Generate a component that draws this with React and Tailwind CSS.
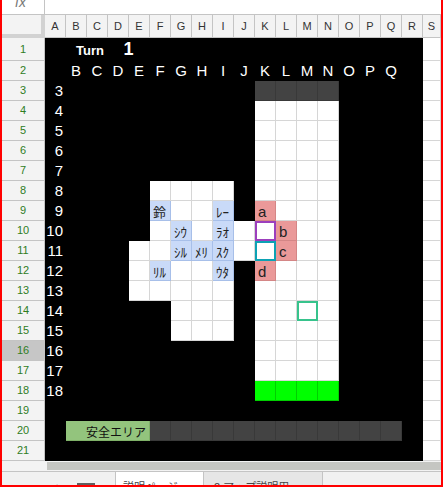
const COLS = ['A', 'B', 'C', 'D', 'E', 'F', 'G', 'H', 'I', 'J', 'K', 'L', 'M', 'N', 'O', 'P', 'Q', 'R', 'S']

const LOOK = {
  black: 'border-r border-b bg-black border-black',
  white: 'border-r border-b bg-white border-[#d6d6d6]',
  dark: 'border-r border-b bg-[#434343] border-[#393939]',
  green: 'border-r border-b bg-[#00ff00] border-[#00cf00]',
  blue: 'border-r border-b bg-[#c9daf8] border-[#a7bfe9]',
  pink: 'border-r border-b bg-[#ea9999] border-[#d48686]',
  safe: 'border-r border-b bg-[#93c47d] border-[#7fb168]',
  purple: 'border-2 bg-white border-[#9c3fbd]',
  teal: 'border-2 bg-white border-[#0ca2b4]',
  gbox: 'border-2 bg-white border-[#37c38c]',
}

// board cells that differ from the black background (row-col)
const BOARD = {
  '8-5': ['white'], '8-6': ['white'], '8-7': ['white'], '8-8': ['white'],
  '9-5': ['blue', '鈴'], '9-6': ['white'], '9-7': ['white'], '9-8': ['blue', 'ﾚｰ'], '9-10': ['pink', 'a'],
  '10-5': ['white'], '10-6': ['blue', 'ｼｳ'], '10-7': ['white'], '10-8': ['blue', 'ﾗｵ'], '10-9': ['white'],
  '10-10': ['purple'], '10-11': ['pink', 'b'],
  '11-4': ['white'], '11-5': ['white'], '11-6': ['blue', 'ｼﾙ'], '11-7': ['blue', 'ﾒﾘ'], '11-8': ['blue', 'ｽｸ'],
  '11-9': ['white'], '11-10': ['teal'], '11-11': ['pink', 'c'],
  '12-4': ['white'], '12-5': ['blue', 'ﾘﾙ'], '12-6': ['white'], '12-7': ['white'], '12-8': ['blue', 'ｳﾀ'],
  '12-10': ['pink', 'd'],
  '13-4': ['white'], '13-5': ['white'], '13-6': ['white'], '13-7': ['white'], '13-8': ['white'],
  '14-6': ['white'], '14-7': ['white'], '14-8': ['white'], '14-12': ['gbox'],
  '15-6': ['white'], '15-7': ['white'], '15-8': ['white'],
}

function cellAt(r, c) {
  const hit = BOARD[r + '-' + c]
  if (hit) return hit
  if (c >= 10 && c <= 13 && r >= 3 && r <= 18) {
    if (r === 3) return ['dark']
    if (r === 18) return ['green']
    return ['white']
  }
  return ['black']
}

function Cell({ look = 'black', span = '', className = '', children }) {
  return (
    <div className={`${LOOK[look]} ${span} flex items-end overflow-hidden whitespace-nowrap ${className}`}>
      {children}
    </div>
  )
}

function SheetCell() {
  return <div className="border-r border-b border-[#d6d6d6] bg-white"></div>
}

function RowHead({ n }) {
  return (
    <div className={`${n === 16 ? 'bg-[#c6c6c6]' : 'bg-[#f3f3f3]'} border-r border-b border-[#c4c4c4] flex items-center justify-center text-[11px] text-[#2f7d1e]`}>
      {n}
    </div>
  )
}

function BoardRow({ r }) {
  const cells = []
  for (let c = 0; c < 18; c++) {
    if (c === 0) {
      cells.push(
        <Cell key={c} className="justify-end pr-[2px] text-white text-[15px] leading-[14px] pb-[2px]">
          {r <= 18 ? r : ''}
        </Cell>
      )
      continue
    }
    const [look, label] = cellAt(r, c)
    let text = null
    if (look === 'blue') text = <span className="pl-[3px] text-[13px] leading-none text-[#222] pb-[1px]">{label}</span>
    if (look === 'pink') text = <span className="pl-[3px] text-[15px] leading-[14px] text-[#222] pb-[1px]">{label}</span>
    cells.push(<Cell key={c} look={look}>{text}</Cell>)
  }
  return (
    <>
      <RowHead n={r} />
      {cells}
      <SheetCell />
    </>
  )
}

function App() {
  const rows = []
  for (let r = 3; r <= 21; r++) {
    if (r === 20) continue
    rows.push(<BoardRow key={r} r={r} />)
  }

  return (
    <div className="w-[443px] h-[487px] overflow-hidden bg-white border-l-2 border-r-2 border-b-2 border-[#ff0000] font-['Liberation_Sans','Noto_Sans_CJK_JP',sans-serif]">

      {/* FORMULA BAR */}
      <div className="h-[15px] flex border-b border-[#c4c4c4] overflow-hidden">
        <div className="w-[43px] border-r border-[#c4c4c4] pl-[13px]">
          <span className="block -mt-[8px] text-[14px] italic text-[#777]">fx</span>
        </div>
        <div className="flex-1"></div>
      </div>

      {/* GRID */}
      <div className="grid grid-cols-[43px_repeat(18,21px)_18px] grid-rows-[23px_23px_repeat(20,20px)]">

        {/* column headers */}
        <div className="bg-[#f3f3f3] border-r-4 border-b-4 border-[#d2d2d2]"></div>
        {COLS.map((col) => (
          <div key={col} className="bg-[#f3f3f3] border-r border-b border-[#c4c4c4] flex items-center justify-center text-[11px] text-[#333]">
            {col}
          </div>
        ))}

        {/* row 1 */}
        <RowHead n={1} />
        <Cell />
        <Cell span="col-span-2" className="pl-[10px] pb-[2px] text-white font-bold text-[13px] leading-[14px]">Turn</Cell>
        <Cell span="col-span-2" className="justify-center pb-[2px] text-white font-bold text-[18px] leading-[18px]">1</Cell>
        {COLS.slice(5, 18).map((col) => <Cell key={col} />)}
        <SheetCell />

        {/* row 2 */}
        <RowHead n={2} />
        <Cell />
        {COLS.slice(1, 17).map((col) => (
          <Cell key={col} className="justify-center text-white text-[15px] leading-[14px] pb-[2px]">{col}</Cell>
        ))}
        <Cell />
        <SheetCell />

        {rows.slice(0, 17)}

        {/* row 20 */}
        <RowHead n={20} />
        <Cell />
        <Cell look="safe" span="col-span-4" className="justify-end pr-[3px] text-[12px] leading-none pb-[1px] text-[#111]">安全エリア</Cell>
        {COLS.slice(5, 17).map((col) => <Cell key={col} look="dark" />)}
        <Cell />
        <SheetCell />

        {rows.slice(17)}
      </div>

      {/* HORIZONTAL SCROLLBAR */}
      <div className="h-[11px] flex bg-[#f3f3f3] border-b border-[#c4c4c4]">
        <div className="w-[45px]"></div>
        <div className="flex-1 my-[1px] bg-[#c5c6c2]"></div>
      </div>

      {/* SHEET TABS */}
      <div className="h-[13px] flex bg-[#f1f1f1] text-[11px] leading-none text-[#444] overflow-hidden">
        <div className="w-[113px] flex items-start pt-[10px] gap-[16px] pl-[51px]">
          <span className="text-[14px] -mt-[1px]">+</span>
          <div className="w-[18px] h-[3px] bg-[#5f5f5f] mt-[1px]"></div>
        </div>
        <div className="w-[89px] bg-white border-l border-r border-[#c4c4c4] pt-[10px] pl-[7px] flex gap-[8px]">
          <span>説明ページ</span>
          <span>▾</span>
        </div>
        <div className="w-[119px] bg-[#e6e6e6] border-r border-[#c4c4c4] pt-[10px] pl-[10px]">
          <span>2 マップ説明用</span>
        </div>
        <div className="flex-1"></div>
      </div>

    </div>
  )
}

export default App
